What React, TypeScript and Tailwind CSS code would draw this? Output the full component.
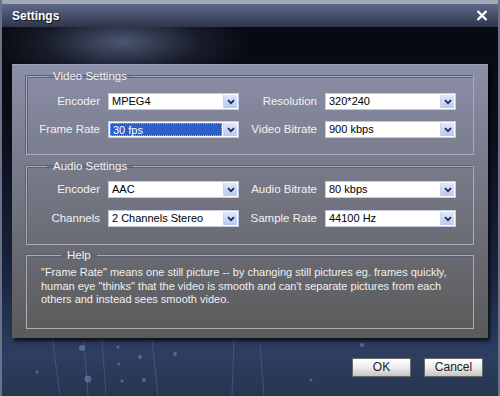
import React from "react";

const font = { fontFamily: '"Liberation Sans", Arial, sans-serif' };

function Arrow() {
  return (
    <div className="absolute right-[1px] top-[1px] bottom-[1px] w-[14px] bg-gradient-to-b from-[#dfe7fa] to-[#b9c9ef] border-l border-[#c9d4ee] flex items-center justify-center">
      <svg width="8" height="6" viewBox="0 0 8 6">
        <path d="M1 1.2 L4 4.2 L7 1.2" fill="none" stroke="#1d2d5e" strokeWidth="1.8" />
      </svg>
    </div>
  );
}

function Select({ value, active }: { value: string; active?: boolean }) {
  return (
    <div className="relative w-[131px] h-[17px] bg-white border border-[#c4cbe0] text-[11px] text-black leading-[15px]">
      {active ? (
        <div className="absolute left-[1px] top-[1px] bottom-[1px] right-[16px] bg-[#2d5fcc] border border-dotted border-[#d8b040] text-white pl-[2px] leading-[12px]">
          {value}
        </div>
      ) : (
        <div className="pl-[3px] font-medium">{value}</div>
      )}
      <Arrow />
    </div>
  );
}

function Row({ l1, v1, l2, v2, active }: { l1: string; v1: string; l2: string; v2: string; active?: boolean }) {
  return (
    <div className="flex items-center">
      <div className="w-[81px] text-right text-[11.5px] text-[#f2f2f4] leading-[17px] pr-[8px]">{l1}</div>
      <Select value={v1} active={active} />
      <div className="w-[86px] text-right text-[11.5px] text-[#f2f2f4] leading-[17px] pr-[8px]">{l2}</div>
      <Select value={v2} />
    </div>
  );
}

function Group({ title, children, className }: { title: string; children: React.ReactNode; className?: string }) {
  return (
    <fieldset className={`border border-[#a9acb8] shadow-[-1px_-1px_0_#5c6072,inset_1px_1px_0_#5c6072] ${className ?? ""}`}>
      <legend className="ml-[20px] px-[6px] text-[11.5px] leading-[16px] text-[#f2f2f4]">{title}</legend>
      {children}
    </fieldset>
  );
}

function Button({ children }: { children: React.ReactNode }) {
  return (
    <div className="w-[59px] h-[19px] border border-[#6a6a6a] bg-gradient-to-b from-[#ffffff] via-[#ececec] to-[#c4c4c4] text-[12px] leading-[17px] text-[#222] text-center">
      {children}
    </div>
  );
}

export default function App() {
  return (
    <div
      style={font}
      className="relative w-[500px] h-[396px] overflow-hidden bg-[radial-gradient(ellipse_130px_45px_at_120px_42px,#4c5672_0%,rgba(40,46,66,0.5)_60%,transparent_100%),linear-gradient(to_bottom,#06080d_0%,#0b0f1b_35%,#1a2540_70%,#2d3e61_90%,#26354f_100%)] border-l-2 border-r-2 border-[#6a7188]"
    >
      <svg className="absolute inset-0 pointer-events-none" width="500" height="396">
        <g stroke="#6f86b4" strokeOpacity="0.35" strokeWidth="1">
          <line x1="50" y1="335" x2="58" y2="396" />
          <line x1="82" y1="340" x2="86" y2="396" />
          <line x1="100" y1="338" x2="104" y2="396" />
          <line x1="150" y1="340" x2="156" y2="396" />
          <line x1="232" y1="338" x2="230" y2="396" />
          <line x1="258" y1="345" x2="262" y2="396" />
        </g>
        <g fill="#8aa2d0" fillOpacity="0.45">
          <circle cx="80" cy="348" r="3" />
          <circle cx="86" cy="379" r="3.5" />
          <circle cx="116" cy="347" r="1.5" />
          <circle cx="117" cy="364" r="1.5" />
          <circle cx="138" cy="357" r="2" />
          <circle cx="173" cy="354" r="2" />
          <circle cx="120" cy="381" r="1.5" />
          <circle cx="142" cy="380" r="2" />
          <circle cx="35" cy="372" r="1.5" />
          <circle cx="360" cy="345" r="2" />
          <circle cx="309" cy="380" r="1.5" />
        </g>
      </svg>

      {/* title bar */}
      <div className="relative h-[27px] border-t-[4px] border-[#a4a9b8] bg-gradient-to-b from-[#5f6a8a] to-[#2e354c] flex items-center justify-between pl-[10px] pr-[10px]">
        <div className="text-[12px] font-bold text-white [text-shadow:1px_1px_1px_#101018] leading-[16px]">Settings</div>
        <svg width="12" height="11" viewBox="0 0 12 11">
          <path d="M1.5 1 L10.5 10 M10.5 1 L1.5 10" stroke="white" strokeWidth="2.4" />
        </svg>
      </div>

      {/* panel */}
      <div className="relative mt-[37px] ml-[10px] w-[476px] h-[274px] bg-gradient-to-b from-[#8b8fa8] via-[#727480] to-[#5a5a5a] shadow-[2px_3px_3px_rgba(0,0,0,0.7)] border-t border-[#9ea3bc] pt-[3px] pl-[14px] pr-[14px] flex flex-col">
        <Group title="Video Settings" className="pt-[9px] pb-[16px]">
          <div className="flex flex-col gap-[11px]">
            <Row l1="Encoder" v1="MPEG4" l2="Resolution" v2="320*240" />
            <Row l1="Frame Rate" v1="30 fps" l2="Video Bitrate" v2="900 kbps" active />
          </div>
        </Group>
        <Group title="Audio Settings" className="mt-[3px] pt-[7px] pb-[17px]">
          <div className="flex flex-col gap-[12px]">
            <Row l1="Encoder" v1="AAC" l2="Audio Bitrate" v2="80 kbps" />
            <Row l1="Channels" v1="2 Channels Stereo" l2="Sample Rate" v2="44100 Hz" />
          </div>
        </Group>
        <Group title="Help" className="mt-[2px] h-[82px] pt-[3px] pl-[14px] pr-[10px]">
          <div className="text-[11px] leading-[13.5px] text-[#f0f0f0]">
            "Frame Rate" means one still picture -- by changing still pictures eg. frames quickly, human eye "thinks" that the video is smooth and can't separate pictures from each others and instead sees smooth video.
          </div>
        </Group>
      </div>

      {/* buttons */}
      <div className="relative mt-[20px] flex justify-end gap-[13px] pr-[15px]">
        <Button>OK</Button>
        <Button>Cancel</Button>
      </div>
    </div>
  );
}
